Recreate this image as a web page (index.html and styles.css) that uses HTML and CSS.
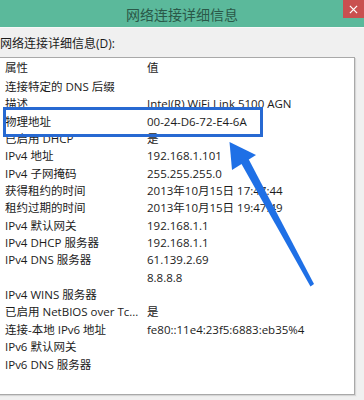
FILE: index.html
```html
<!DOCTYPE html>
<html lang="zh-CN">
<head>
    <meta charset="UTF-8">
    <meta name="viewport" content="width=device-width, initial-scale=1.0">
    <title>网络连接详细信息</title>
    <link rel="stylesheet" href="styles.css">
</head>
<body>
    <div class="dialog">
        <div class="titlebar">
            <div class="title">网络连接详细信息</div>
            <button class="close-btn" aria-label="关闭">
                <svg viewBox="0 0 10 10" width="9" height="9">
                    <path d="M1 1L9 9M9 1L1 9" stroke="#fff" stroke-width="1.4"/>
                </svg>
            </button>
        </div>

        <div class="dialog-body">
            <div class="list-label">网络连接详细信息(D):</div>
            <div class="details-box">
                <div class="row header-row">
                    <span class="cell-prop">属性</span>
                    <span class="cell-val">值</span>
                </div>
                <div class="row"><span class="cell-prop">连接特定的 DNS 后缀</span><span class="cell-val"></span></div>
                <div class="row"><span class="cell-prop">描述</span><span class="cell-val">Intel(R) WiFi Link 5100 AGN</span></div>
                <div class="row"><span class="cell-prop">物理地址</span><span class="cell-val">00-24-D6-72-E4-6A</span></div>
                <div class="row"><span class="cell-prop">已启用 DHCP</span><span class="cell-val">是</span></div>
                <div class="row"><span class="cell-prop">IPv4 地址</span><span class="cell-val">192.168.1.101</span></div>
                <div class="row"><span class="cell-prop">IPv4 子网掩码</span><span class="cell-val">255.255.255.0</span></div>
                <div class="row"><span class="cell-prop">获得租约的时间</span><span class="cell-val">2013年10月15日 17:47:44</span></div>
                <div class="row"><span class="cell-prop">租约过期的时间</span><span class="cell-val">2013年10月15日 19:47:49</span></div>
                <div class="row"><span class="cell-prop">IPv4 默认网关</span><span class="cell-val">192.168.1.1</span></div>
                <div class="row"><span class="cell-prop">IPv4 DHCP 服务器</span><span class="cell-val">192.168.1.1</span></div>
                <div class="row"><span class="cell-prop">IPv4 DNS 服务器</span><span class="cell-val">61.139.2.69</span></div>
                <div class="row"><span class="cell-prop"></span><span class="cell-val">8.8.8.8</span></div>
                <div class="row"><span class="cell-prop">IPv4 WINS 服务器</span><span class="cell-val"></span></div>
                <div class="row"><span class="cell-prop">已启用 NetBIOS over Tc...</span><span class="cell-val">是</span></div>
                <div class="row"><span class="cell-prop">连接-本地 IPv6 地址</span><span class="cell-val">fe80::11e4:23f5:6883:eb35%4</span></div>
                <div class="row"><span class="cell-prop">IPv6 默认网关</span><span class="cell-val"></span></div>
                <div class="row"><span class="cell-prop">IPv6 DNS 服务器</span><span class="cell-val"></span></div>
            </div>
        </div>
    </div>

    <!-- annotation drawn over the dialog -->
    <svg class="annotation" viewBox="0 0 364 400" width="364" height="400">
        <rect x="4.5" y="108.5" width="257" height="27" fill="none" stroke="#2769d2" stroke-width="3"/>
        <polygon points="229.5,142 232,170 256,155" fill="#1f70e6"/>
        <polygon points="239.5,160.5 247.5,157 314,284 310.5,286.5" fill="#1f70e6"/>
    </svg>
</body>
</html>
```

FILE: styles.css
```css
* {
    margin: 0;
    padding: 0;
    box-sizing: border-box;
}

body {
    width: 364px;
    height: 400px;
    overflow: hidden;
    background: #f0f0f0;
    color: #1b1b1b;
    font-family: "Segoe UI", "Open Sans", "Noto Sans CJK SC", sans-serif;
    font-size: 11.5px;
    position: relative;
}

.titlebar {
    height: 27px;
    background: #5bb99b;
    display: flex;
    align-items: center;
    justify-content: center;
    position: relative;
}

.title {
    font-family: "Noto Sans CJK SC", sans-serif;
    font-size: 14px;
    color: #2a5848;
}

.close-btn {
    position: absolute;
    top: 0;
    right: 0;
    width: 21px;
    height: 18px;
    border: none;
    background: #c9504f;
    display: flex;
    align-items: center;
    justify-content: center;
}

.dialog-body {
    padding: 3px 9px 0 0;
    border-top: 1px solid #f8f8f8;
}

.list-label {
    height: 26px;
    line-height: 26px;
    font-size: 12px;
}

.details-box {
    margin-left: -4px;
    height: 338px;
    background: #fff;
    border: 1px solid #a9a9a9;
    box-shadow: 1px 1px 0 #d6d6d6, 2px 2px 0 #ececec;
}

.row {
    display: flex;
    height: 17.35px;
    line-height: 17.35px;
    white-space: nowrap;
}

.header-row {
    height: 20px;
    line-height: 19px;
}

.cell-prop {
    width: 142px;
    padding-left: 8px;
}

.cell-val {
    flex: 1;
    padding-left: 8px;
}

.annotation {
    position: absolute;
    top: 0;
    left: 0;
    pointer-events: none;
}
```
